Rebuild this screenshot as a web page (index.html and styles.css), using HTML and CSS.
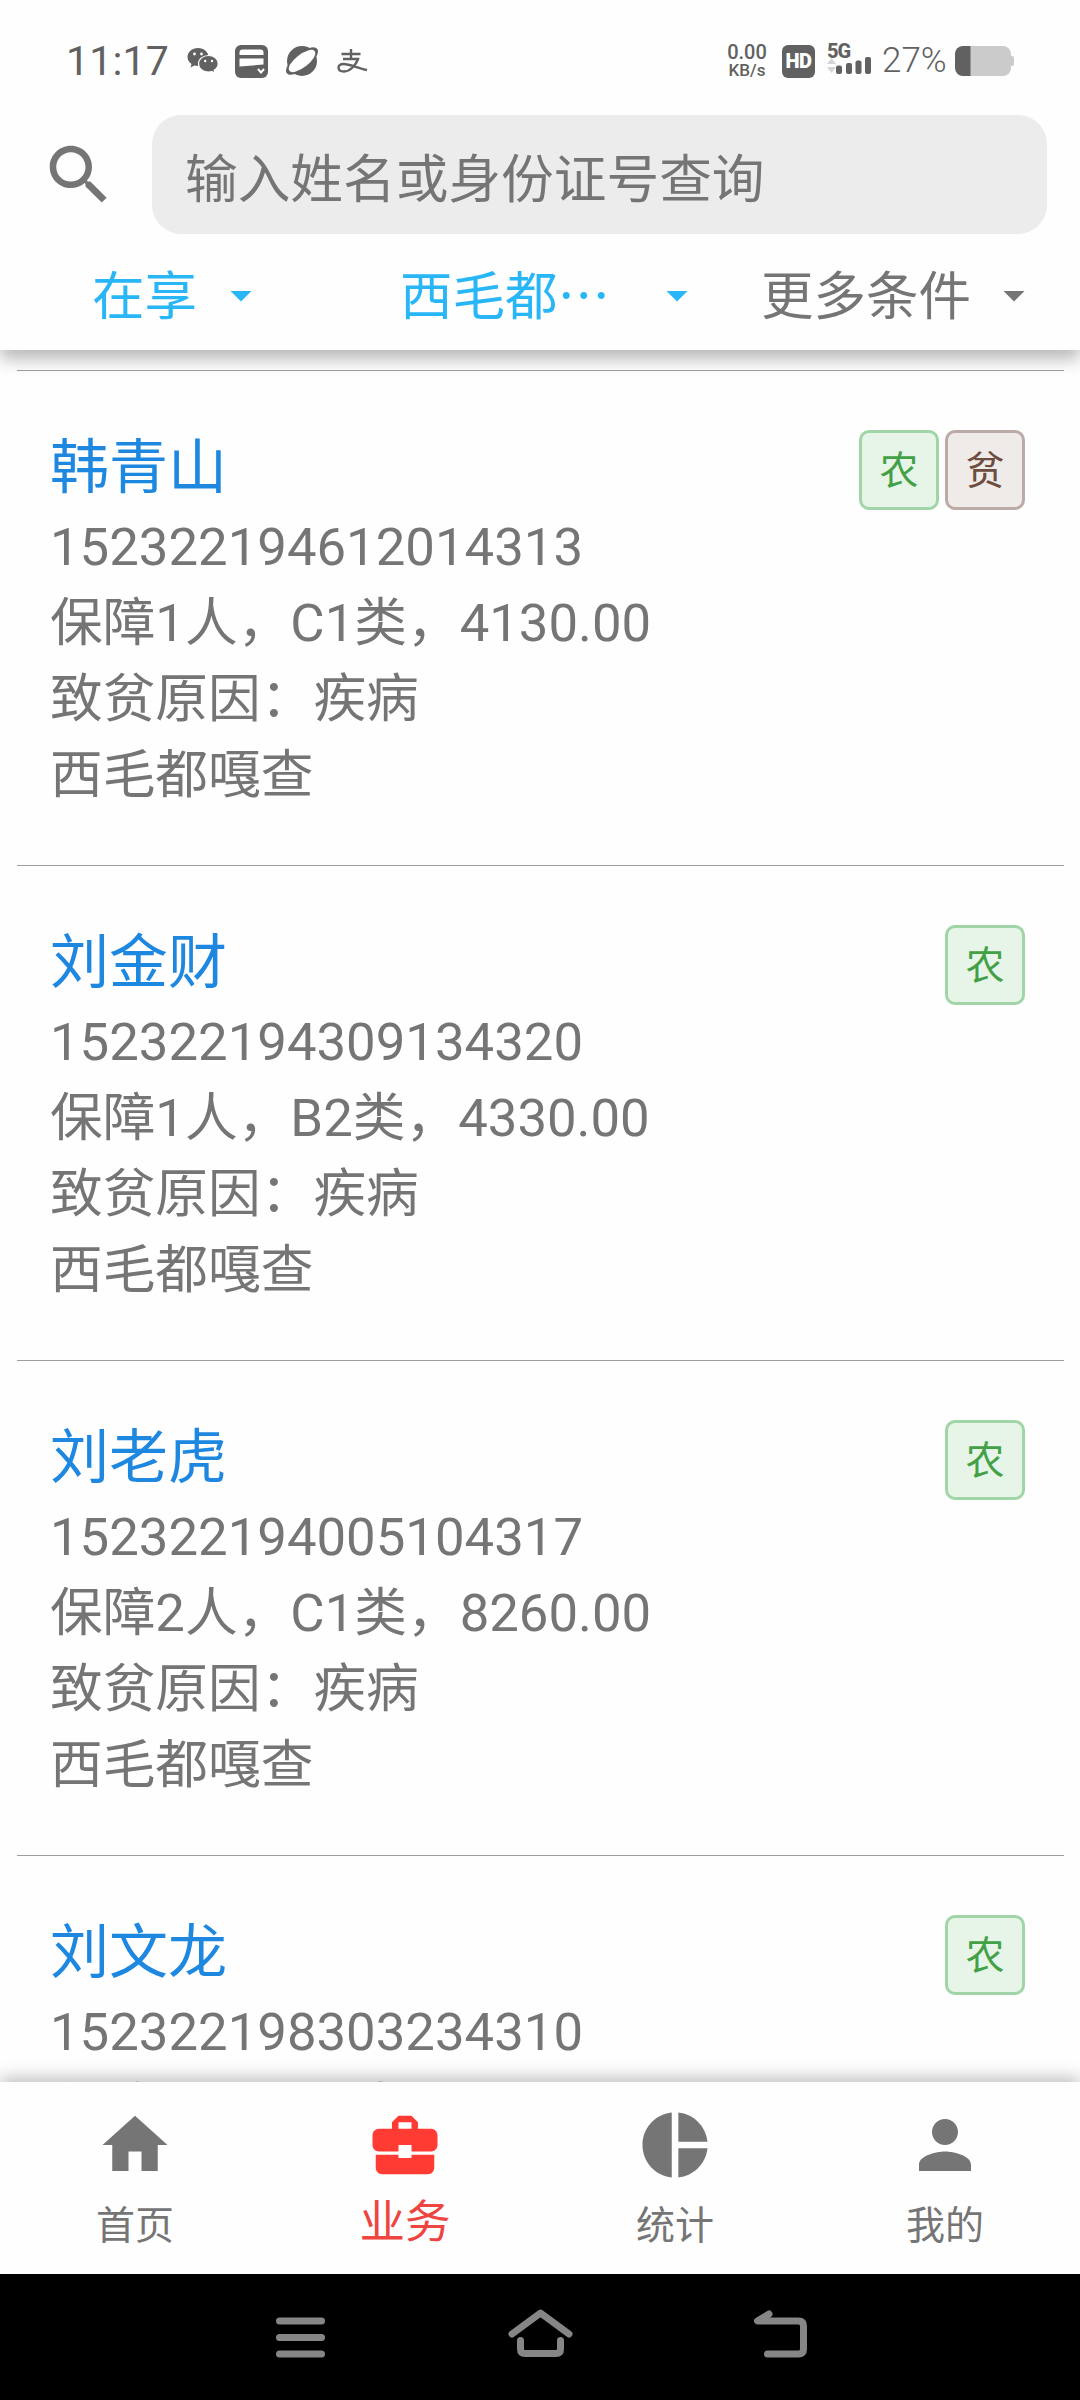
FILE: index.html
```html
<!DOCTYPE html>
<html lang="zh-CN">
<head>
<meta charset="utf-8">
<title>业务</title>
<link rel="stylesheet" href="styles.css">
</head>
<body>
<div class="screen">
  <header class="header">
    <div class="status">
      <span class="clock">11:17</span>
      <svg class="s-wechat" width="32" height="28" viewBox="0 0 32 28">
        <path fill="#616161" d="M11 1C5 1 .5 5 .5 10c0 3 1.500 5.300 4 7l-1 3.500 4-2c1 .3 2.200.5 3.500.5C17 19 21.500 15 21.500 10S17 1 11 1z"/>
        <path fill="#616161" stroke="#fff" stroke-width="1.200" d="M21.500 8.500c-5.500 0-10 3.600-10 8.300s4.500 8.200 10 8.200c1.200 0 2.300-.2 3.300-.5l3.200 1.800-.8-3c2.500-1.600 4-3.800 4-6.500 0-4.700-4.200-8.300-9.700-8.300z"/>
        <g fill="#fff"><circle cx="7.500" cy="7" r="1.400"/><circle cx="14.500" cy="7" r="1.400"/><circle cx="18.200" cy="14" r="1.200"/><circle cx="25" cy="14" r="1.200"/></g>
      </svg>
      <svg class="s-card" width="33" height="33" viewBox="0 0 33 33">
        <rect width="33" height="33" rx="6" fill="#616161"/>
        <path fill="#fff" d="M7.500 4.500h18a3 3 0 0 1 3 3V10h-24V7.500a3 3 0 0 1 3-3zM4.500 13.500h24v6l-24 2z"/>
        <path d="M23 24l3 3.500 3-3.500" fill="none" stroke="#fff" stroke-width="2"/>
      </svg>
      <svg class="s-planet" width="34" height="32" viewBox="0 0 34 32">
        <circle cx="17" cy="16" r="15" fill="#616161"/>
        <ellipse cx="17" cy="16" rx="19.500" ry="8" transform="rotate(-39 17 16)" fill="#616161"/>
        <ellipse cx="17" cy="16" rx="16" ry="6.500" transform="rotate(-38 17 16)" fill="#fff"/>
      </svg>
      <svg class="s-pay" width="31" height="26" viewBox="0 0 31 26">
        <g fill="none" stroke="#616161" stroke-width="2.400"><path d="M4.500 6h19M14 1v9M6 11h15c-2 6-8 12.500-14 12.500-7 0-7.500-7.500-.5-7.500 6 0 14 4 23.500 6"/></g>
      </svg>
      <div class="rate"><span>0.00</span><span class="unit">KB/s</span></div>
      <span class="hd">HD</span>
      <div class="signal">
        <span class="net">5G</span>
        <svg width="45" height="18" viewBox="0 0 45 18">
          <path fill="#d5d5d5" d="M0 7l4.500-6L9 7zM0 10h9l-4.500 6z"/>
          <g fill="#616161"><rect x="9" y="8.500" width="6" height="8.500" rx="2"/><rect x="19" y="6" width="6" height="11" rx="2"/><rect x="28.500" y="3.500" width="6" height="13.500" rx="2"/><rect x="38" y="0" width="6" height="17" rx="2"/></g>
        </svg>
      </div>
      <span class="percent">27%</span>
      <svg class="s-battery" width="60" height="30" viewBox="0 0 60 30">
        <path fill="#cbcbcb" d="M8 0h40a8 8 0 0 1 8 8v2h1a2 2 0 0 1 2 2v6a2 2 0 0 1-2 2h-1v2a8 8 0 0 1-8 8H8z"/>
        <path fill="#616161" d="M8 0h7.500v30H8a8 8 0 0 1-8-8V8a8 8 0 0 1 8-8z"/>
      </svg>
    </div>
    <div class="search">
      <svg class="glass" width="78" height="78" viewBox="0 0 24 24"><path fill="#757575" d="M15.500 14h-.79l-.28-.27C15.410 12.590 16 11.110 16 9.500 16 5.910 13.090 3 9.500 3S3 5.910 3 9.500 5.910 16 9.500 16c1.610 0 3.090-.59 4.230-1.570l.27.28v.79l5 4.990L20.490 19l-4.990-5zm-6 0C7.010 14 5 11.990 5 9.500S7.010 5 9.500 5 14 7.010 14 9.500 11.990 14 9.500 14z"/></svg>
      <div class="field">输入姓名或身份证号查询</div>
    </div>
    <div class="filters">
      <div class="filter on status-filter"><span class="label">在享</span><i class="caret"></i></div>
      <div class="filter on area-filter"><span class="label">西毛都⋯</span><i class="caret"></i></div>
      <div class="filter more-filter"><span class="label">更多条件</span><i class="caret"></i></div>
    </div>
  </header>

  <main class="list">
    <article class="item">
      <div class="info"><h2>韩青山</h2><p>152322194612014313</p><p>保障1人，C1类，4130.00</p><p>致贫原因：疾病</p><p>西毛都嘎查</p></div>
      <div class="tags"><span class="tag farm">农</span><span class="tag poor">贫</span></div>
    </article>
    <article class="item">
      <div class="info"><h2>刘金财</h2><p>152322194309134320</p><p>保障1人，B2类，4330.00</p><p>致贫原因：疾病</p><p>西毛都嘎查</p></div>
      <div class="tags"><span class="tag farm">农</span></div>
    </article>
    <article class="item">
      <div class="info"><h2>刘老虎</h2><p>152322194005104317</p><p>保障2人，C1类，8260.00</p><p>致贫原因：疾病</p><p>西毛都嘎查</p></div>
      <div class="tags"><span class="tag farm">农</span></div>
    </article>
    <article class="item">
      <div class="info"><h2>刘文龙</h2><p>152322198303234310</p><p>保障1人，C1类</p></div>
      <div class="tags"><span class="tag farm">农</span></div>
    </article>
  </main>

  <nav class="tabs">
    <div class="tab">
      <svg width="78" height="78" viewBox="0 0 24 24"><path d="M10 20v-6h4v6h5v-8h3L12 3 2 12h3v8z"/></svg>
      <span>首页</span>
    </div>
    <div class="tab active">
      <svg width="78" height="78" viewBox="0 0 24 24"><path d="M10 16v-1H3.010L3 19c0 1.110.89 2 2 2h14c1.110 0 2-.89 2-2v-4h-7v1h-4zm10-9h-4.010V5l-2-2h-4l-2 2v2H4c-1.100 0-2 .9-2 2v3c0 1.110.89 2 2 2h6v-2h4v2h6c1.100 0 2-.9 2-2V9c0-1.100-.9-2-2-2zm-6 0h-4V5h4v2z"/></svg>
      <span>业务</span>
    </div>
    <div class="tab">
      <svg width="78" height="78" viewBox="0 0 24 24"><path d="M11 2v20c-5.070-.5-9-4.790-9-10s3.930-9.500 9-10zm2.030 0v8.990H22c-.47-4.740-4.240-8.520-8.970-8.990zm0 11.010V22c4.740-.47 8.500-4.250 8.970-8.990h-8.970z"/></svg>
      <span>统计</span>
    </div>
    <div class="tab">
      <svg width="78" height="78" viewBox="0 0 24 24"><path d="M12 12c2.210 0 4-1.790 4-4s-1.790-4-4-4-4 1.790-4 4 1.790 4 4 4zm0 2c-2.670 0-8 1.340-8 4v2h16v-2c0-2.660-5.330-4-8-4z"/></svg>
      <span>我的</span>
    </div>
  </nav>

  <footer class="system">
    <svg width="66" height="56" viewBox="0 0 66 56"><path d="M12.500 14h42M12.500 30.500h42M12.500 47h42"/></svg>
    <svg width="66" height="56" viewBox="0 0 66 56"><path d="M5 27L33.500 6 62 27M13.500 33.500V42q0 4.500 4.500 4.500h31q4.500 0 4.500-4.500V33.500"/></svg>
    <svg width="66" height="56" viewBox="0 0 66 56"><path d="M22 7L10.500 14H51.500q5 0 5 5v23q0 5-5 5H20.500"/></svg>
  </footer>
</div>
</body>
</html>
```
FILE: styles.css
```css
* { box-sizing: border-box; margin: 0; padding: 0; }

body {
  width: 1080px;
  height: 2400px;
  background: #fefefe;
  font-family: Roboto, "Noto Sans CJK SC", sans-serif;
  color: #757575;
}

svg { display: block; flex: none; }

.screen { display: flex; flex-direction: column; width: 1080px; height: 2400px; overflow: hidden; }

.header {
  flex: none;
  height: 350px;
  background: #fefefe;
  z-index: 2;
  box-shadow: 0 9px 16px rgba(0, 0, 0, .28);
}

.status { display: flex; align-items: center; height: 115px; padding: 7px 0 0 66px; color: #616161; white-space: nowrap; }
.clock { width: 121px; font-size: 41px; line-height: 48px; letter-spacing: .2px; }
.s-wechat { margin-right: 16px; }
.s-card { margin-right: 17px; }
.s-planet { margin-right: 18px; }
.rate { display: flex; flex-direction: column; align-items: center; width: 40px; margin-left: 359px; font-size: 20px; font-weight: 500; line-height: 18px; }
.unit { font-size: 17px; }
.hd { display: flex; align-items: center; justify-content: center; width: 33px; height: 33px; margin-left: 15px; border-radius: 6px; background: #616161; color: #fff; font-size: 20px; font-weight: 900; letter-spacing: -.5px; }
.signal { display: flex; flex-direction: column; width: 45px; height: 34px; margin-left: 12px; }
.net { height: 13px; font-size: 20px; font-weight: 800; line-height: 15px; letter-spacing: -1px; }
.percent { width: 73px; margin-left: 10px; font-size: 35px; font-weight: 300; line-height: 40px; }

.search { display: flex; align-items: flex-start; height: 119px; padding-left: 40px; }
.glass { margin-top: 21px; }
.field { width: 895px; height: 119px; margin-left: 34px; padding-left: 33px; border-radius: 29px; background: #ececec; font-size: 52.7px; line-height: 131px; }

.filters { display: flex; height: 116px; font-size: 52.5px; line-height: 118px; white-space: nowrap; }
.filter { display: flex; align-items: center; }
.on { color: #29b6f6; }
.status-filter { width: 309px; padding-left: 92px; gap: 33px; }
.area-filter { width: 452px; padding-left: 91px; gap: 56px; }
.more-filter { gap: 32px; }
.label { font-family: "Noto Sans CJK SC", sans-serif; }
.caret { width: 22px; height: 11px; margin-top: 8px; background: currentColor; clip-path: polygon(0 0, 100% 0, 50% 100%); }

.list { flex: 1; min-height: 0; padding: 20px 16px 0 17px; overflow: hidden; }
.item { display: flex; justify-content: space-between; height: 495px; padding: 59px 39px 0 33px; border-top: 1px solid #9e9e9e; }
.info h2 { height: 79px; font-size: 59px; font-weight: 400; line-height: 76px; color: #1e88e0; }
.info p { height: 76px; font-size: 52.7px; line-height: 76px; white-space: nowrap; }
.tags { display: flex; gap: 6px; }
.tag { display: flex; align-items: center; justify-content: center; width: 80px; height: 80px; border: 3px solid; border-radius: 10px; padding-top: 2px; font-size: 39px; line-height: 74px; }
.farm { color: #43a047; border-color: #a1d5a8; background: #e6f5e8; }
.poor { color: #6d4c41; border-color: #bcaaa6; background: #efebe8; }

.tabs { display: flex; flex: none; height: 192px; background: #fefefe; z-index: 2; box-shadow: 0 -4px 16px rgba(0, 0, 0, .26); }
.tab { display: flex; flex-direction: column; align-items: center; width: 270px; padding-top: 24px; font-size: 39px; line-height: 85px; fill: #757575; }
.active { color: #ee4540; fill: #ff3b33; font-size: 45.5px; line-height: 78px; }

.system { display: flex; flex: none; justify-content: center; gap: 174px; height: 126px; padding-top: 33px; background: #000; z-index: 3; }
.system svg { fill: none; stroke: #868686; stroke-width: 7; stroke-linecap: round; stroke-linejoin: round; }
```
